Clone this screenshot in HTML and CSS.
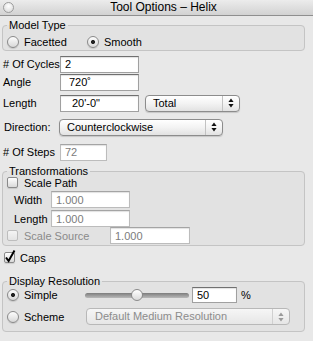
FILE: index.html
```html
<!DOCTYPE html>
<html lang="en">
<head>
    <meta charset="UTF-8">
    <title>Tool Options - Helix</title>
    <link rel="stylesheet" href="styles.css">
</head>
<body>
    <div class="window">
        <div class="titlebar">
            <span class="close"></span>
            <span class="title">Tool Options – Helix</span>
        </div>

        <fieldset class="group group-model">
            <legend>Model Type</legend>
            <div class="radio-row">
                <label class="opt opt-first"><span class="radio"></span>Facetted</label>
                <label class="opt"><span class="radio on"></span>Smooth</label>
            </div>
        </fieldset>

        <div class="row row-cycles">
            <span class="lbl"># Of Cycles</span>
            <input class="field field-main" type="text" value="2">
        </div>
        <div class="row">
            <span class="lbl">Angle</span>
            <input class="field field-main field-angle" type="text" value="720˚">
        </div>
        <div class="row row-length">
            <span class="lbl">Length</span>
            <input class="field field-main field-length" type="text" value="20'-0&quot;">
            <div class="popup popup-total">
                <span class="popup-text">Total</span>
                <span class="popup-arrows">
                    <svg width="6" height="10" viewBox="0 0 6 10"><path d="M3 0.5 L5.6 4 H0.4Z M3 9.5 L5.6 6 H0.4Z"/></svg>
                </span>
            </div>
        </div>
        <div class="row row-direction">
            <span class="lbl">Direction:</span>
            <div class="popup popup-direction">
                <span class="popup-text">Counterclockwise</span>
                <span class="popup-arrows">
                    <svg width="6" height="10" viewBox="0 0 6 10"><path d="M3 0.5 L5.6 4 H0.4Z M3 9.5 L5.6 6 H0.4Z"/></svg>
                </span>
            </div>
        </div>
        <div class="row row-steps">
            <span class="lbl"># Of Steps</span>
            <input class="field field-short dim" type="text" value="72">
        </div>

        <fieldset class="group group-trans">
            <legend>Transformations</legend>
            <div class="check-row">
                <span class="check"></span>Scale Path
            </div>
            <div class="row row-sub row-width">
                <span class="lbl">Width</span>
                <input class="field field-main dim" type="text" value="1.000">
            </div>
            <div class="row row-sub row-sublen">
                <span class="lbl">Length</span>
                <input class="field field-main dim" type="text" value="1.000">
            </div>
            <div class="row row-source">
                <span class="check off"></span>
                <span class="source-lbl">Scale Source</span>
                <input class="field field-source dim" type="text" value="1.000">
            </div>
        </fieldset>

        <div class="check-row caps-row">
            <span class="check">
                <svg width="9" height="9" viewBox="0 0 9 9"><path d="M1 4.5 L3.6 8 L9.5 -2.5"/></svg>
            </span>Caps
        </div>

        <fieldset class="group group-display">
            <legend>Display Resolution</legend>
            <div class="row row-simple">
                <label class="opt opt-simple"><span class="radio on"></span>Simple</label>
                <div class="slider"></div>
                <input class="field field-pct" type="text" value="50">
                <span class="pct">%</span>
            </div>
            <div class="row row-scheme">
                <label class="opt opt-scheme"><span class="radio"></span>Scheme</label>
                <div class="popup popup-scheme off">
                    <span class="popup-text">Default Medium Resolution</span>
                    <span class="popup-arrows">
                        <svg width="6" height="10" viewBox="0 0 6 10"><path d="M3 0.5 L5.6 4 H0.4Z M3 9.5 L5.6 6 H0.4Z"/></svg>
                    </span>
                </div>
            </div>
        </fieldset>
    </div>
</body>
</html>
```

FILE: styles.css
```css
body {
    margin: 0;
    background: #e8e8e8;
    font-family: "Liberation Sans", Arial, sans-serif;
    font-size: 11px;
    color: #000;
}

.window {
    width: 313px;
    height: 341px;
    overflow: hidden;
}

/* title bar */
.titlebar {
    display: flex;
    align-items: center;
    height: 15px;
    border-bottom: 1px solid #8f8f8f;
    background: linear-gradient(#ececec, #d2d2d2);
}

.close {
    width: 9px;
    height: 9px;
    margin-left: 3px;
    border: 1px solid #9c9c9c;
    border-radius: 50%;
    background: radial-gradient(circle at 50% 35%, #ffffff, #d4d4d4);
}

.title {
    flex: 1;
    text-align: center;
    font-size: 12px;
    line-height: 15px;
}

/* group boxes */
.group {
    margin: 0 8px 0 2px;
    padding: 0;
    min-width: 0;
    border: 1px solid #c4c4c4;
    border-radius: 4px;
    background: #e2e2e2;
}

.group legend {
    margin-left: 4px;
    padding: 0 2px;
    line-height: 12px;
}

.group-model {
    margin-top: 3px;
}

.group-trans {
    margin-top: 4px;
}

.group-display {
    margin-top: 11px;
}

/* radios and checkboxes */
.radio-row {
    display: flex;
    align-items: center;
    height: 13px;
    margin: 4px 0 2px 4px;
}

.opt {
    display: flex;
    align-items: center;
}

.opt-first {
    width: 80px;
}

.radio {
    width: 10px;
    height: 10px;
    margin-right: 5px;
    border: 1px solid #8a8a8a;
    border-radius: 50%;
    background: linear-gradient(#fdfdfd, #d8d8d8);
    box-shadow: 0 1px 1px rgba(0, 0, 0, 0.12);
}

.radio.on {
    background: radial-gradient(circle, #222 0, #222 1.6px, transparent 2.4px), linear-gradient(#fdfdfd, #d8d8d8);
}

.check-row {
    display: flex;
    align-items: center;
    height: 13px;
    margin: -1px 0 0 4px;
}

.check {
    width: 9px;
    height: 9px;
    margin-right: 6px;
    border: 1px solid #8a8a8a;
    border-radius: 2px;
    background: linear-gradient(#ffffff, #d9d9d9);
    box-shadow: 0 1px 1px rgba(0, 0, 0, 0.12);
}

.check svg {
    display: block;
    overflow: visible;
}

.check svg path {
    fill: none;
    stroke: #000;
    stroke-width: 2;
}

.check.off {
    border-color: #bdbdbd;
    background: linear-gradient(#f4f4f4, #e4e4e4);
    box-shadow: none;
}

.caps-row {
    margin: 5px 0 0 4px;
}

.caps-row .check {
    margin-right: 5px;
}

/* form rows */
.row {
    display: flex;
    align-items: center;
    height: 18px;
    padding-left: 3px;
}

.lbl {
    width: 57px;
    white-space: pre;
}

.row-cycles {
    margin-top: 4px;
}

.row-length {
    margin-top: 3px;
}

.row-direction {
    margin-top: 6px;
    padding-left: 4px;
}

.row-direction .lbl {
    width: 55px;
}

.row-steps {
    margin-top: 7px;
}

.row-sub {
    height: 17px;
    padding-left: 11px;
}

.row-sub .lbl {
    width: 37px;
}

.row-width {
    margin-top: 2px;
}

.row-sublen {
    margin-top: 2px;
}

.row-source {
    height: 17px;
    padding-left: 4px;
    margin-bottom: 1px;
}

.source-lbl {
    width: 86px;
    color: #8a8a8a;
}

.row-simple {
    height: 16px;
    padding-left: 4px;
}

.opt-simple {
    width: 78px;
}

.row-scheme {
    height: 17px;
    margin: 5px 0 6px;
    padding-left: 4px;
}

.opt-scheme {
    width: 79px;
}

/* text fields */
.field {
    box-sizing: border-box;
    height: 17px;
    margin: 0;
    padding: 0 4px;
    border: 1px solid #a0a0a0;
    border-top-color: #707070;
    background: #fff;
    font: inherit;
    color: #000;
    box-shadow: inset 0 1px 1px rgba(0, 0, 0, 0.12);
    outline: none;
}

.field.dim {
    color: #7c7c7c;
    border-color: #bcbcbc;
    border-top-color: #a4a4a4;
}

.field-main {
    width: 79px;
}

.field-angle {
    padding-left: 8px;
}

.field-length {
    padding-left: 11px;
}

.field-short {
    width: 47px;
}

.field-source {
    width: 80px;
}

.field-pct {
    width: 45px;
    height: 16px;
    margin-left: 3px;
}

.pct {
    margin-left: 4px;
}

/* popup buttons */
.popup {
    box-sizing: border-box;
    display: flex;
    height: 17px;
    border: 1px solid #8c8c8c;
    border-radius: 4px;
    background: linear-gradient(#ffffff, #f3f3f3 50%, #e2e2e2);
    box-shadow: 0 1px 1px rgba(0, 0, 0, 0.15);
}

.popup-text {
    flex: 1;
    padding-left: 7px;
    line-height: 15px;
}

.popup-arrows {
    display: flex;
    align-items: center;
    justify-content: center;
    width: 16px;
    border-left: 1px solid #c2c2c2;
}

.popup-arrows svg path {
    fill: #111;
}

.popup-total {
    width: 95px;
    margin-left: 6px;
}

.popup-direction {
    width: 164px;
}

.popup-scheme {
    width: 204px;
}

.popup.off {
    border-color: #b8b8b8;
    background: linear-gradient(#f6f6f6, #e6e6e6);
    box-shadow: none;
    color: #8c8c8c;
}

.popup.off .popup-text {
    padding-left: 8px;
}

.popup.off .popup-arrows {
    border-left-color: #d0d0d0;
}

.popup.off .popup-arrows svg path {
    fill: #9a9a9a;
}

/* slider */
.slider {
    position: relative;
    width: 104px;
    height: 5px;
    border-radius: 3px;
    background: linear-gradient(#7c7c7c, #b9b9b9);
}

.slider::after {
    content: "";
    position: absolute;
    left: 46px;
    top: -4px;
    width: 10px;
    height: 10px;
    border: 1px solid #8a8a8a;
    border-radius: 50%;
    background: linear-gradient(#ffffff, #dadada);
}
```
